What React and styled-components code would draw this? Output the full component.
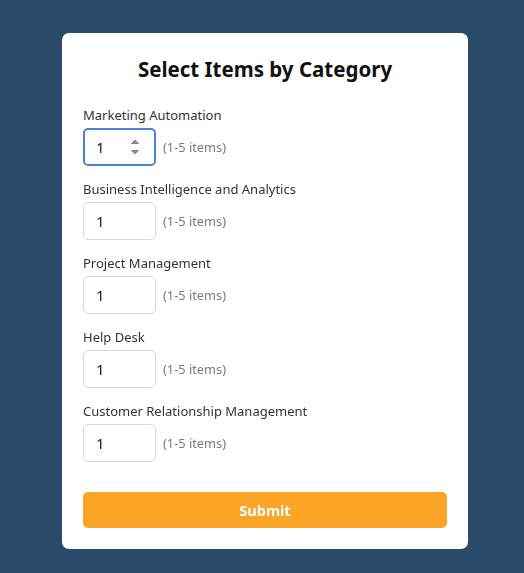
import React from "react";
import styled, { createGlobalStyle } from "styled-components";

const GlobalStyle = createGlobalStyle`
  html, body {
    margin: 0;
    padding: 0;
    background: #2c4a69;
    font-family: "Segoe UI", "Noto Sans", "Liberation Sans", sans-serif;
  }
  #root {
    min-height: 573px;
  }
`;

const Page = styled.div`
  padding: 33px 0 25px 62px;
`;

const Card = styled.form`
  width: 406px;
  box-sizing: border-box;
  background: #ffffff;
  border-radius: 7px;
  padding: 21px;
`;

const Title = styled.h2`
  margin: 0 0 21px;
  font-size: 20.5px;
  line-height: 30px;
  font-weight: 700;
  text-align: center;
  color: #111;
`;

const Group = styled.div`
  margin-bottom: 13px;
`;

const Label = styled.label`
  display: block;
  font-size: 13px;
  line-height: 20px;
  color: #333;
  margin-bottom: 3px;
`;

const Row = styled.div`
  display: flex;
  align-items: center;
  gap: 7px;
`;

const NumberInput = styled.input`
  width: 73px;
  height: 38px;
  box-sizing: border-box;
  padding: 0 12px;
  border: 1px solid #d9d9d9;
  border-radius: 5px;
  font-family: inherit;
  font-size: 15px;
  color: #222;
  outline: none;
  &:focus {
    border: 2px solid #4a82d8;
    padding: 0 11px;
  }
`;

const Hint = styled.span`
  font-size: 12.8px;
  color: #7a7a7a;
`;

const SubmitButton = styled.button`
  display: block;
  width: 100%;
  height: 36px;
  margin-top: 30px;
  border: none;
  border-radius: 5px;
  background: #fba526;
  color: #fff;
  font-family: inherit;
  font-size: 14.5px;
  font-weight: 700;
  cursor: pointer;
`;

const categories = [
  "Marketing Automation",
  "Business Intelligence and Analytics",
  "Project Management",
  "Help Desk",
  "Customer Relationship Management",
];

export default function App() {
  return (
    <Page>
      <GlobalStyle />
      <Card onSubmit={(e) => e.preventDefault()}>
        <Title>Select Items by Category</Title>
        {categories.map((name, i) => (
          <Group key={name}>
            <Label htmlFor={`cat-${i}`}>{name}</Label>
            <Row>
              <NumberInput
                id={`cat-${i}`}
                type="number"
                min={1}
                max={5}
                defaultValue={1}
                autoFocus={i === 0}
              />
              <Hint>(1-5 items)</Hint>
            </Row>
          </Group>
        ))}
        <SubmitButton type="submit">Submit</SubmitButton>
      </Card>
    </Page>
  );
}
